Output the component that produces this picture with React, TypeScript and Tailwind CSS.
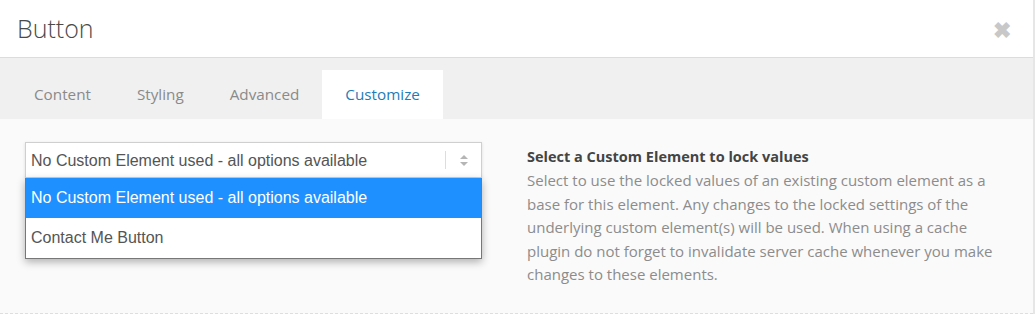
const tabs = ['Content', 'Styling', 'Advanced', 'Customize'];

const options = ['No Custom Element used - all options available', 'Contact Me Button'];

export default function App() {
  const active = 'Customize';

  return (
    <div
      className="w-[1035px] h-[314px] overflow-hidden bg-[#fafafa] border-r-2 border-[#e6e6e6] flex flex-col"
      style={{fontFamily: '"Open Sans", "Noto Sans", sans-serif'}}
    >
      <header className="h-[58px] shrink-0 bg-white border-b border-[#dcdcdc] flex items-center justify-between pl-[17px] pr-[22px]">
        <h1 className="text-[25px] font-light text-[#4a4a4a] leading-none">Button</h1>
        <span className="text-[#c8c8c8] text-[22px] font-bold leading-none">✖</span>
      </header>

      <nav className="h-[61px] shrink-0 bg-[#f0f0f0] flex items-end pl-[11px]">
        {tabs.map(tab => (
          <div
            key={tab}
            className={
              tab === active
                ? 'h-[49px] px-[23px] flex items-center bg-white text-[15.25px] text-[#1e7cb8]'
                : 'h-[49px] px-[23px] flex items-center text-[15.25px] text-[#8a8a8a]'
            }
          >
            {tab}
          </div>
        ))}
      </nav>

      <main className="flex-1 flex gap-[45px] pl-[25px] pt-[23px] border-b border-dashed border-[#dedede]">
        <div className="w-[457px] shrink-0" style={{fontFamily: '"Liberation Sans", Arial, sans-serif'}}>
          <div className="h-[36px] bg-white border border-[#cfcfcf] shadow-[0_1px_3px_rgba(0,0,0,0.12)] flex items-center text-[16px] text-[#555]">
            <span className="flex-1 pl-[5px] pt-px">{options[0]}</span>
            <span className="w-px h-[18px] bg-[#ddd]" />
            <span className="w-[35px] flex justify-center">
              <svg width="8" height="11" viewBox="0 0 8 11">
                <path d="M4 0 L8 4 L0 4 Z" fill="#b5b5b5"/>
                <path d="M0 7 L8 7 L4 11 Z" fill="#b5b5b5"/>
              </svg>
            </span>
          </div>
          <ul className="bg-white border border-[#777] border-t-0 shadow-[0_3px_8px_rgba(0,0,0,0.3)] text-[16px]">
            {options.map((opt, i) => (
              <li
                key={opt}
                className={
                  i === 0
                    ? 'h-[40px] flex items-center pl-[5px] bg-[#1e90ff] text-white'
                    : 'h-[40px] flex items-center pl-[5px] text-[#555]'
                }
              >
                {opt}
              </li>
            ))}
          </ul>
        </div>

        <div className="w-[472px] pt-[3px]">
          <p className="text-[14.5px] font-bold text-[#444] leading-[24px]">Select a Custom Element to lock values</p>
          <p className="text-[15px] text-[#8c8c8c] leading-[23.6px]">
            Select to use the locked values of an existing custom element as a base for this element. Any changes to the locked settings of the underlying custom element(s) will be used. When using a cache plugin do not forget to invalidate server cache whenever you make changes to these elements.
          </p>
        </div>
      </main>
    </div>
  );
}
